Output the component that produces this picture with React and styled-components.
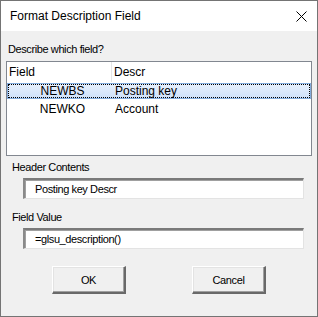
import React from "react";
import styled, { createGlobalStyle } from "styled-components";

const Global = createGlobalStyle`
  * { box-sizing: border-box; }
  html, body { margin: 0; padding: 0; background: #ffffff; }
  body { font-family: "Liberation Sans", Arial, sans-serif; }
`;

const Window = styled.div`
  width: 318px;
  height: 317px;
  border: 1px solid #747474;
  display: flex;
  flex-direction: column;
  background: #f0f0f0;
`;

const TitleBar = styled.div`
  height: 30px;
  flex: none;
  background: #ffffff;
  display: flex;
  align-items: center;
  justify-content: space-between;
  padding: 0 10px 0 9px;
`;

const Title = styled.span`
  font-size: 12px;
  color: #000;
  line-height: 14px;
`;

const CloseIcon = () => (
  <svg width="11" height="11" viewBox="0 0 11 11" style={{ display: "block" }}>
    <path d="M0.5 0.5 L10.5 10.5 M10.5 0.5 L0.5 10.5" stroke="#000" strokeWidth="1" fill="none" />
  </svg>
);

const Body = styled.div`
  flex: 1;
  display: flex;
  flex-direction: column;
  padding-top: 12px;
`;

const Label = styled.div`
  font-size: 11px;
  line-height: 13px;
  letter-spacing: -0.4px;
  color: #000;
  margin-left: ${(p) => p.$indent}px;
  margin-top: ${(p) => p.$top || 0}px;
`;

const List = styled.div`
  margin: 5px 0 0 5px;
  width: 306px;
  height: 95px;
  border: 1px solid #828790;
  background: #fff;
  display: flex;
  flex-direction: column;
`;

const HeaderRow = styled.div`
  height: 20px;
  display: flex;
  align-items: stretch;
`;

const HeaderCell = styled.div`
  font-size: 12px;
  color: #000;
  display: flex;
  align-items: center;
  padding-left: 2px;
  width: ${(p) => (p.$w ? p.$w + "px" : "auto")};
  flex: ${(p) => (p.$w ? "none" : "1")};
  border-right: ${(p) => (p.$divider ? "1px solid #e5e5e5" : "none")};
`;

const Row = styled.div`
  height: 18px;
  padding-top: 1px;
`;

const RowInner = styled.div`
  height: 16px;
  display: flex;
  align-items: center;
  border: 1px solid ${(p) => (p.$selected ? "#84acdd" : "transparent")};
  background: ${(p) =>
    p.$selected ? "linear-gradient(#e7f0fc, #cfe1fa)" : "transparent"};
  position: relative;
`;

const Focus = styled.div`
  position: absolute;
  inset: 0;
  border: 1px dotted #000;
  pointer-events: none;
`;

const Cell = styled.div`
  font-size: 12px;
  color: #000;
  line-height: 14px;
  width: ${(p) => (p.$w ? p.$w + "px" : "auto")};
  flex: ${(p) => (p.$w ? "none" : "1")};
  text-align: ${(p) => (p.$center ? "center" : "left")};
  padding-left: ${(p) => p.$pl || 0}px;
`;

const TextBox = styled.div`
  margin: 4px 0 0 22px;
  width: 281px;
  height: 21px;
  background: #fff;
  border-style: solid;
  border-width: 2px 1px 1px 2px;
  border-color: #7a7a7a #e3e3e3 #e3e3e3 #8a8a8a;
  box-shadow: inset 1px 1px 0 #a0a0a0;
  display: flex;
  align-items: center;
  padding-left: 10px;
  font-size: 11px;
  letter-spacing: -0.4px;
  color: #000;
`;

const ButtonRow = styled.div`
  margin-top: 17px;
  display: flex;
  justify-content: center;
  gap: 66px;
`;

const Button = styled.div`
  width: 74px;
  height: 28px;
  background: #f0f0f0;
  border-style: solid;
  border-width: 1px 2px 2px 1px;
  border-color: #ffffff #696969 #696969 #ffffff;
  box-shadow: inset -1px -1px 0 #a0a0a0, inset 1px 1px 0 #e3e3e3;
  display: flex;
  align-items: center;
  justify-content: center;
  font-size: 11px;
  letter-spacing: -0.4px;
  color: #000;
`;

const rows = [
  { field: "NEWBS", descr: "Posting key", selected: true },
  { field: "NEWKO", descr: "Account", selected: false },
];

export default function App() {
  return (
    <>
      <Global />
      <Window>
        <TitleBar>
          <Title>Format Description Field</Title>
          <CloseIcon />
        </TitleBar>
        <Body>
          <Label $indent={7}>Describe which field?</Label>
          <List>
            <HeaderRow>
              <HeaderCell $w={105} $divider>Field</HeaderCell>
              <HeaderCell>Descr</HeaderCell>
            </HeaderRow>
            {rows.map((r) => (
              <Row key={r.field}>
                <RowInner $selected={r.selected}>
                  {r.selected && <Focus />}
                  <Cell $w={105} $center $pl={4}>{r.field}</Cell>
                  <Cell $pl={2}>{r.descr}</Cell>
                </RowInner>
              </Row>
            ))}
          </List>
          <Label $indent={11} $top={5}>Header Contents</Label>
          <TextBox>Posting key Descr</TextBox>
          <Label $indent={11} $top={12}>Field Value</Label>
          <TextBox>=glsu_description()</TextBox>
          <ButtonRow>
            <Button>OK</Button>
            <Button>Cancel</Button>
          </ButtonRow>
        </Body>
      </Window>
    </>
  );
}
